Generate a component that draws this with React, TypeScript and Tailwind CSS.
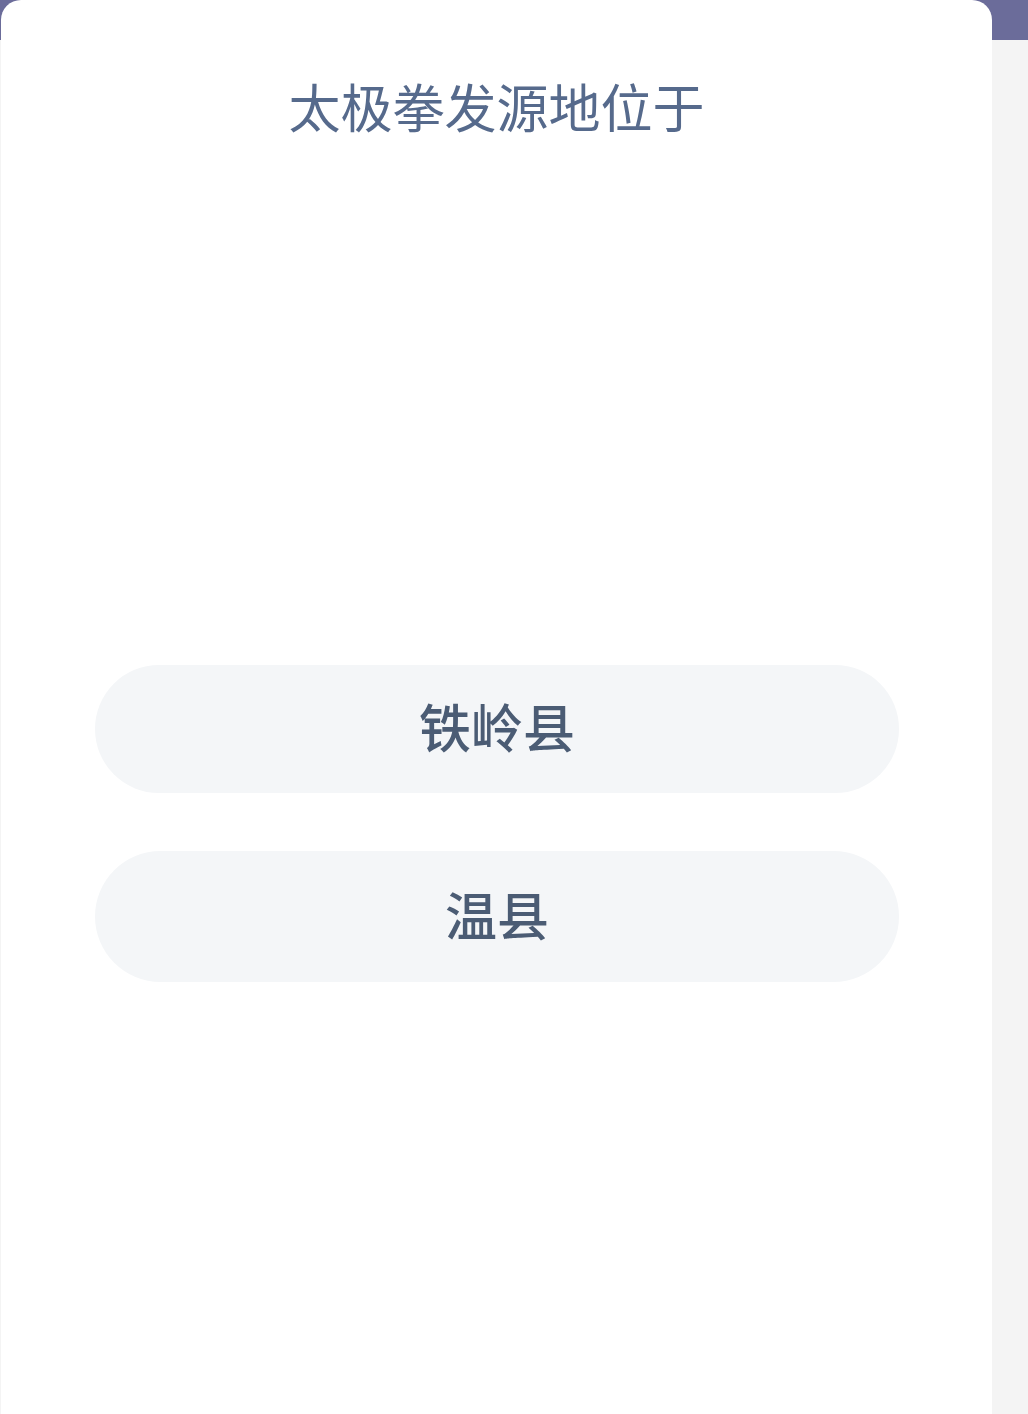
export default function App() {
  const options = [
    { label: '铁岭县', h: 'h-[128px]' },
    { label: '温县', h: 'h-[131px]' },
  ]

  return (
    <div
      className="relative min-h-[1414px] w-full bg-[#f4f4f4]"
      style={{ fontFamily: '"Noto Sans CJK SC", "Noto Sans", sans-serif' }}
    >
      <div className="absolute inset-x-0 top-0 h-[40px] bg-[#6b6c9a]" />
      <div className="relative ml-px w-[991px] min-h-[1414px] rounded-t-[20px] bg-white">
        <div className="pt-[70px] text-center text-[52px] leading-[72px] text-[#566a8c]">
          太极拳发源地位于
        </div>
        <div className="mt-[523px] flex flex-col gap-[58px] pl-[94px] pr-[93px]">
          {options.map(opt => (
            <button
              key={opt.label}
              className={`flex w-full items-center justify-center rounded-full bg-[#f4f6f8] pb-[6px] text-[52px] font-medium text-[#4b5c74] ${opt.h}`}
            >
              {opt.label}
            </button>
          ))}
        </div>
      </div>
    </div>
  )
}
